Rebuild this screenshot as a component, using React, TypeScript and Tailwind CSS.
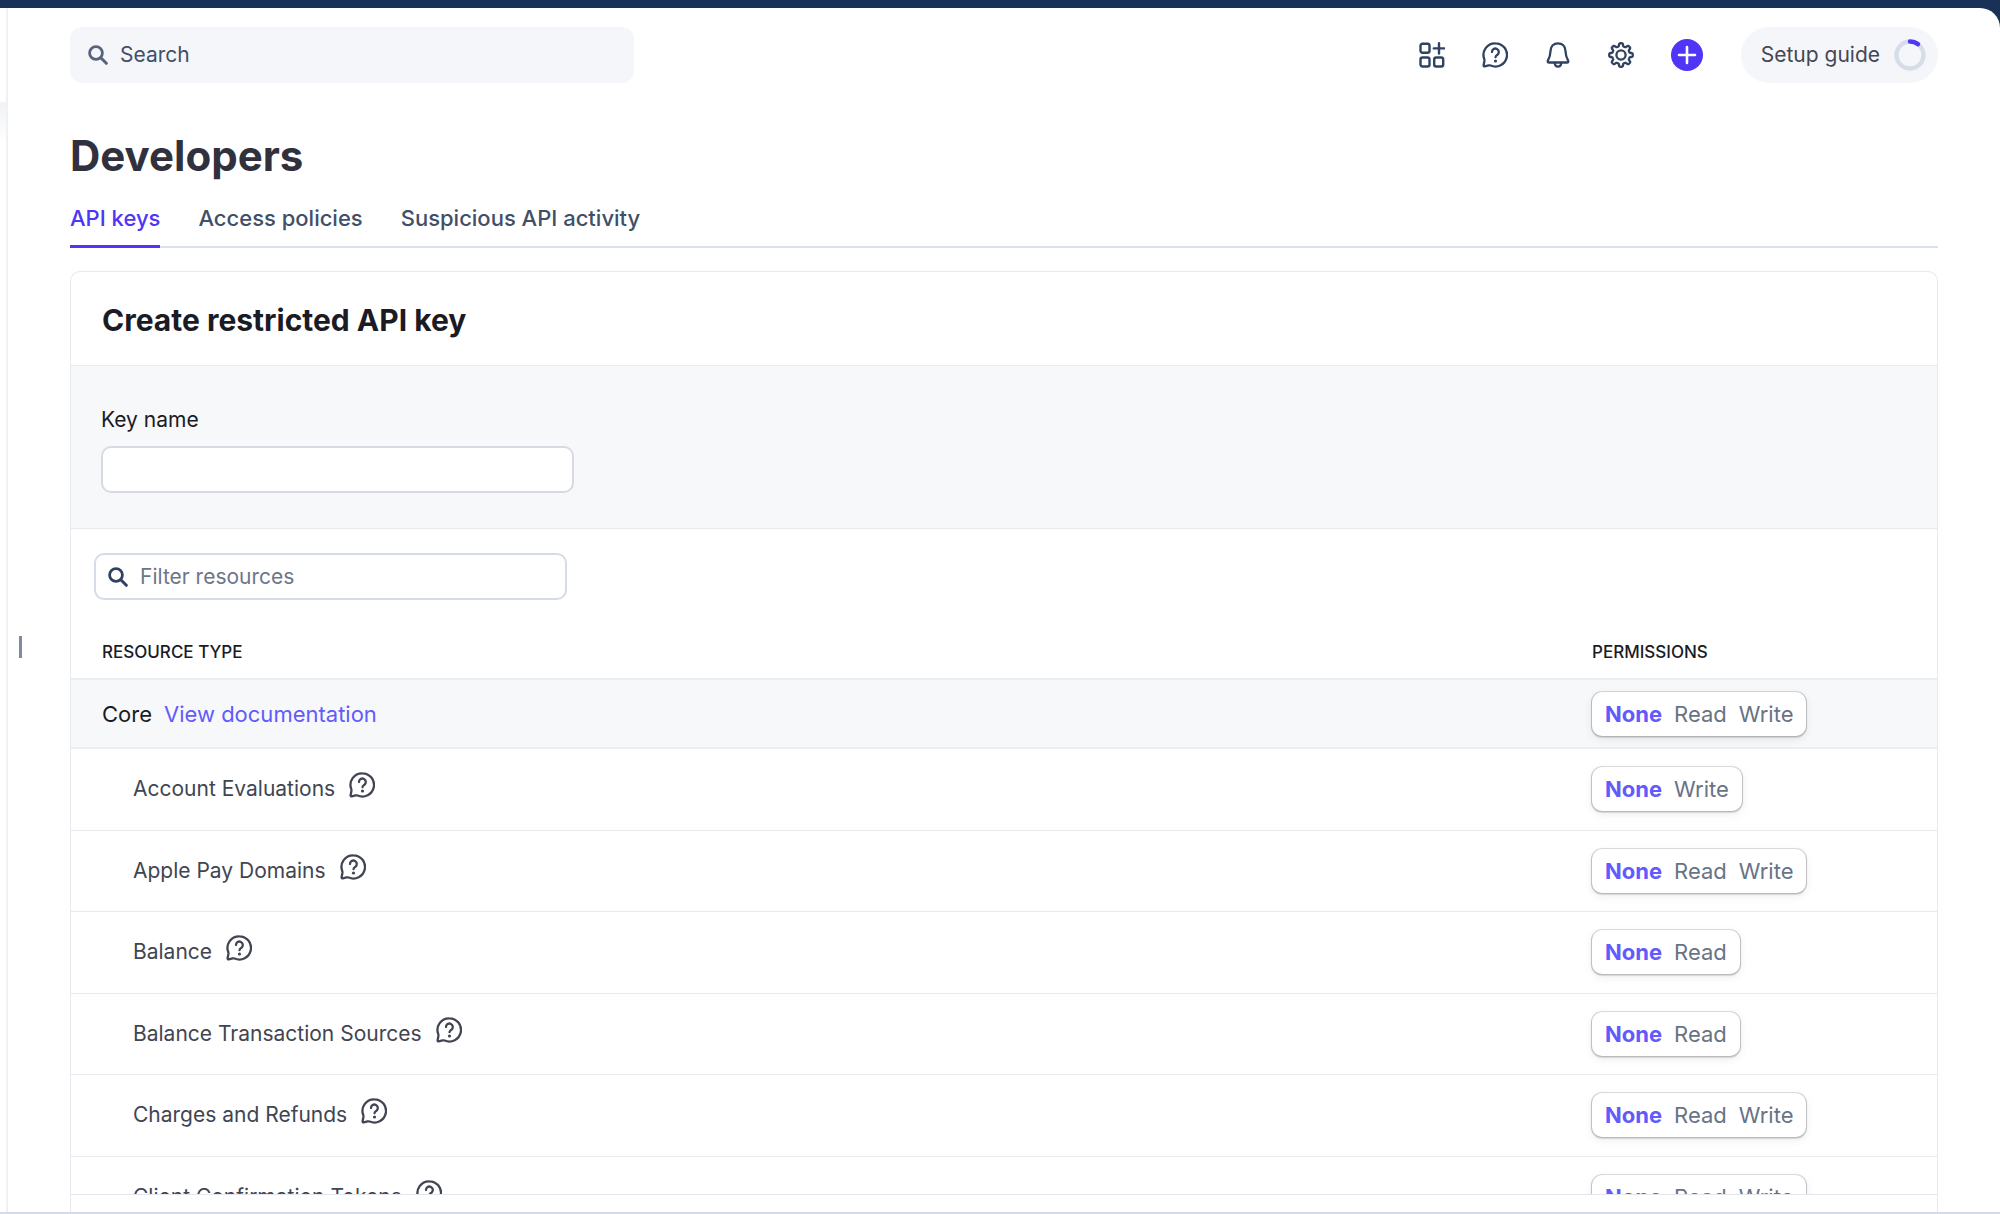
import React, { useState } from "react";

type Permission = "None" | "Read" | "Write";

interface Resource {
  name: string;
  permissions: Permission[];
}

interface IconProps {
  className?: string;
}

const TABS = ["API keys", "Access policies", "Suspicious API activity"];

const RESOURCES: Resource[] = [
  { name: "Account Evaluations", permissions: ["None", "Write"] },
  { name: "Apple Pay Domains", permissions: ["None", "Read", "Write"] },
  { name: "Balance", permissions: ["None", "Read"] },
  { name: "Balance Transaction Sources", permissions: ["None", "Read"] },
  { name: "Charges and Refunds", permissions: ["None", "Read", "Write"] },
  { name: "Client Confirmation Tokens", permissions: ["None", "Read", "Write"] },
];

// eight rounded teeth around the centre of a 26 unit box
const GEAR_PATH =
  Array.from({ length: 160 }, (_, i) => {
    const angle = (i / 160) * Math.PI * 2;
    const radius = 10.3 + 1.5 * Math.tanh(2.6 * Math.cos(8 * angle));
    const x = 13 + radius * Math.sin(angle);
    const y = 13 - radius * Math.cos(angle);
    return `${i === 0 ? "M" : "L"}${x.toFixed(2)} ${y.toFixed(2)}`;
  }).join("") + "Z";

const SearchIcon: React.FC<IconProps> = ({ className }) => (
  <svg viewBox="0 0 20 20" fill="none" stroke="currentColor" className={className}>
    <circle cx="8" cy="8" r="6.4" strokeWidth="2.8" />
    <path d="M12.8 12.8 18.3 18.3" strokeWidth="3" strokeLinecap="round" />
  </svg>
);

const AppsIcon: React.FC<IconProps> = ({ className }) => (
  <svg
    viewBox="0 0 26 26"
    fill="none"
    stroke="currentColor"
    strokeWidth="2.4"
    strokeLinecap="round"
    className={className}
  >
    <rect x="1.5" y="1.8" width="9" height="9" rx="2" />
    <rect x="1.5" y="15.5" width="9" height="9" rx="2" />
    <rect x="15.2" y="15.5" width="9" height="9" rx="2" />
    <path d="M20 1.2v10.4M14.8 6.4h10.4" />
  </svg>
);

const HelpIcon: React.FC<IconProps> = ({ className }) => (
  <svg
    viewBox="0 0 26 26"
    fill="none"
    stroke="currentColor"
    strokeWidth="2.3"
    strokeLinecap="round"
    strokeLinejoin="round"
    className={className}
  >
    <path d="M13.4 1.3a11.6 11.6 0 1 1-4.7 22.2c-.8-.3-1.4-.3-2.2-.1l-3.7.9c-.8.1-1.3-.3-1.2-1.1l.8-4.2c.1-.8 0-1.4-.2-2.1A11.6 11.6 0 0 1 13.4 1.3Z" />
    <path d="M10 10a3.4 3.4 0 1 1 5.4 2.7c-1.2.8-1.9 1.3-1.9 2.5" />
    <circle cx="13.5" cy="19" r="1.6" fill="currentColor" stroke="none" />
  </svg>
);

const BellIcon: React.FC<IconProps> = ({ className }) => (
  <svg
    viewBox="0 0 26 26"
    fill="none"
    stroke="currentColor"
    strokeWidth="2.3"
    strokeLinecap="round"
    strokeLinejoin="round"
    className={className}
  >
    <path d="M13 1.3c-4.3 0-7.2 3-7.4 7.2-.2 4.2-.9 6.9-2.6 9.9-.7 1.2-.2 2.1 1.1 2.1h17.8c1.3 0 1.8-.9 1.1-2.1-1.7-3-2.4-5.7-2.6-9.9C20.2 4.3 17.3 1.3 13 1.3Z" />
    <path d="M9.7 21c.2 2.3 1.5 3.7 3.3 3.7s3.1-1.4 3.3-3.7" />
  </svg>
);

const GearIcon: React.FC<IconProps> = ({ className }) => (
  <svg
    viewBox="0 0 26 26"
    fill="none"
    stroke="currentColor"
    strokeWidth="2.3"
    strokeLinejoin="round"
    className={className}
  >
    <path d={GEAR_PATH} />
    <circle cx="13" cy="13" r="4.6" />
  </svg>
);

const PlusIcon: React.FC<IconProps> = ({ className }) => (
  <svg
    viewBox="0 0 32 32"
    fill="none"
    stroke="currentColor"
    strokeWidth="2.6"
    strokeLinecap="round"
    className={className}
  >
    <path d="M16 8v16M8 16h16" />
  </svg>
);

const ProgressRing: React.FC<IconProps> = ({ className }) => (
  <svg viewBox="0 0 32 32" fill="none" strokeWidth="4.4" className={className}>
    <circle cx="16" cy="16" r="13.5" stroke="#d5dee8" />
    <path d="M16 2.5A13.5 13.5 0 0 1 24 5.1" stroke="#4f35f5" strokeLinecap="round" />
  </svg>
);

const Header: React.FC = () => (
  <header className="flex items-center justify-between">
    <label className="flex h-14 w-[564px] items-center gap-3 rounded-xl bg-[#f5f6fa] px-[18px] text-[#414f69]">
      <SearchIcon className="h-5 w-5 text-[#56637d]" />
      <input
        type="search"
        aria-label="Search"
        placeholder="Search"
        className="min-w-0 flex-1 bg-transparent outline-none placeholder:text-[#414f69]"
      />
    </label>
    <div className="flex items-center text-[#30425f]">
      <div className="mr-[38px] flex items-center gap-[37px]">
        <button type="button" aria-label="Apps">
          <AppsIcon className="h-[26px] w-[26px]" />
        </button>
        <button type="button" aria-label="Help">
          <HelpIcon className="h-[26px] w-[26px]" />
        </button>
        <button type="button" aria-label="Notifications">
          <BellIcon className="h-[26px] w-[26px]" />
        </button>
        <button type="button" aria-label="Settings">
          <GearIcon className="h-[26px] w-[26px]" />
        </button>
        <button type="button" aria-label="Create" className="rounded-full bg-[#4f35f5] text-white">
          <PlusIcon className="h-8 w-8" />
        </button>
      </div>
      <button
        type="button"
        className="flex h-14 items-center gap-[14px] rounded-full bg-[#f5f6fa] pr-3 pl-5 text-[#454754]"
      >
        Setup guide
        <ProgressRing className="h-8 w-8" />
      </button>
    </div>
  </header>
);

const Tabs: React.FC = () => {
  const [active, setActive] = useState(TABS[0]);

  return (
    <nav className="mt-4 flex h-12 gap-[38px] border-b-2 border-[#dbe1ea] text-[22px]">
      {TABS.map((tab) => (
        <button
          key={tab}
          type="button"
          onClick={() => setActive(tab)}
          className={
            tab === active
              ? "-mb-[2px] border-b-[3px] border-[#4f35f5] pb-[10px] font-medium text-[#4f35f5]"
              : "-mb-[2px] border-b-[3px] border-transparent pb-[10px] font-medium text-[#414f69]"
          }
        >
          {tab}
        </button>
      ))}
    </nav>
  );
};

const PermissionPicker: React.FC<{ options: Permission[]; label: string }> = ({
  options,
  label,
}) => {
  const [selected, setSelected] = useState<Permission>("None");

  return (
    <div
      role="group"
      aria-label={label}
      className="inline-flex h-11 items-center gap-3 rounded-[10px] bg-white px-[13px] align-middle text-[22px] shadow-[0_0_0_1px_rgba(0,0,0,0.12),0_1px_1px_1px_rgba(0,0,0,0.12),0_3px_8px_rgba(60,66,87,0.10)]"
    >
      {options.map((option) => (
        <button
          key={option}
          type="button"
          aria-pressed={option === selected}
          onClick={() => setSelected(option)}
          className={option === selected ? "font-bold text-[#625afa]" : "text-[#687385]"}
        >
          {option}
        </button>
      ))}
    </div>
  );
};

const ResourceTable: React.FC = () => (
  <table className="w-full table-fixed border-collapse text-left">
    <thead className="text-[17px] leading-6 text-[#1a1b25]">
      <tr className="h-[55px] border-b-2 border-[#ebeef1]">
        <th className="pt-[2px] pl-[31px] font-medium">RESOURCE TYPE</th>
        <th className="w-[345px] pt-[2px] font-medium">PERMISSIONS</th>
      </tr>
    </thead>
    <tbody>
      <tr className="h-[69px] border-b-2 border-[#ebeef1] bg-[#f6f8fa] text-[22px]">
        <td className="pl-[31px] text-[#1a1b25]">
          Core
          <a href="#core" className="ml-3 text-[#625afa]">
            View documentation
          </a>
        </td>
        <td>
          <PermissionPicker options={["None", "Read", "Write"]} label="Core" />
        </td>
      </tr>
      {RESOURCES.map(({ name, permissions }) => (
        <tr key={name} className="border-b border-[#e6e9ed] odd:h-[81px] even:h-[82px]">
          <td className="pl-[62px] text-[#414552]">
            <div className="flex items-center gap-[14px]">
              {name}
              <HelpIcon className="mb-2 h-[26px] w-[26px]" />
            </div>
          </td>
          <td>
            <PermissionPicker options={permissions} label={name} />
          </td>
        </tr>
      ))}
    </tbody>
  </table>
);

const RestrictedKeyPanel: React.FC = () => (
  <section className="mt-[23px] flex min-h-0 flex-1 flex-col rounded-t-[10px] border border-b-0 border-[#e6e9ed]">
    <h2 className="px-[31px] pt-7 pb-[25px] text-[30px] leading-10 font-bold text-[#1a1b25]">
      Create restricted API key
    </h2>
    <div className="border-y border-[#e6e9ed] bg-[#f6f8fa] px-[30px] pt-10 pb-[35px]">
      <label htmlFor="key-name" className="block text-[#1a1b25]">
        Key name
      </label>
      <input
        id="key-name"
        type="text"
        className="mt-3 block h-[47px] w-[473px] rounded-[10px] border-2 border-[#d8dae3] bg-white px-3"
      />
    </div>
    <div className="min-h-0 flex-1 overflow-hidden pt-6">
      <label className="ml-[23px] flex h-[47px] w-[473px] items-center gap-3 rounded-[10px] border-2 border-[#d5dbe8] px-3 text-[#30425f]">
        <SearchIcon className="h-5 w-5" />
        <input
          type="text"
          aria-label="Filter resources"
          placeholder="Filter resources"
          className="min-w-0 flex-1 outline-none placeholder:text-[#6c7688]"
        />
      </label>
      <div className="pt-6">
        <ResourceTable />
      </div>
    </div>
    <footer className="h-[18px] shrink-0 border-t border-[#e3e6ec]" />
  </section>
);

const App: React.FC = () => (
  <div className="flex h-screen flex-col overflow-hidden border-b-2 border-[#d5dbe4] bg-[#1a3157] pt-2 font-['Inter',sans-serif] text-[21px] leading-7">
    <div className="flex min-h-0 flex-1 rounded-tr-[20px] bg-white">
      <aside className="w-2 shrink-0 border-r-2 border-[#eef2f6] pt-[94px]">
        <div className="h-10 bg-linear-to-b from-[#f1f2f4] to-white" />
      </aside>
      <div className="flex w-[62px] shrink-0 items-center pt-[74px] pl-[11px]">
        <div className="h-[22px] w-[3px] bg-[#7f8ba3]" />
      </div>
      <main className="flex min-w-0 flex-1 flex-col pt-[19px] pr-[62px]">
        <Header />
        <h1 className="mt-[45px] text-[42px] leading-[56px] font-bold text-[#30313d]">Developers</h1>
        <Tabs />
        <RestrictedKeyPanel />
      </main>
    </div>
  </div>
);

export default App;
